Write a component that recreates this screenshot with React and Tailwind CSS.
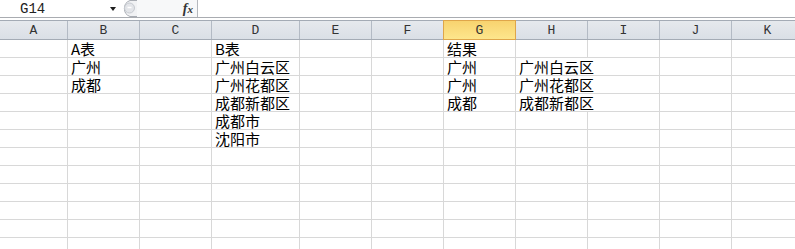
import React from "react";

const cols = [
  { l: "A", w: 68 },
  { l: "B", w: 72 },
  { l: "C", w: 72 },
  { l: "D", w: 88 },
  { l: "E", w: 72 },
  { l: "F", w: 72 },
  { l: "G", w: 72 },
  { l: "H", w: 72 },
  { l: "I", w: 72 },
  { l: "J", w: 72 },
  { l: "K", w: 72 },
];

const data = [
  { 1: "A表", 3: "B表", 6: "结果" },
  { 1: "广州", 3: "广州白云区", 6: "广州", 7: "广州白云区" },
  { 1: "成都", 3: "广州花都区", 6: "广州", 7: "广州花都区" },
  { 3: "成都新都区", 6: "成都", 7: "成都新都区" },
  { 3: "成都市" },
  { 3: "沈阳市" },
  {}, {}, {}, {}, {}, {},
];

const cellFont = { fontFamily: '"Noto Sans CJK SC", "Noto Sans", sans-serif' };
const monoFont = { fontFamily: '"Liberation Mono", "DejaVu Sans Mono", monospace' };

export default function App() {
  return (
    <div className="w-[795px] h-[249px] overflow-hidden bg-white">
      {/* Formula bar */}
      <div className="flex h-[18px] border-b border-[#a9acb1] bg-white">
        <div className="flex w-[121px] items-center">
          <span className="ml-[20px] text-[14px] leading-none text-[#222]" style={monoFont}>
            G14
          </span>
          <span className="ml-auto mr-[5px] h-0 w-0 border-x-[3.5px] border-t-[4px] border-x-transparent border-t-[#1e1e1e]" />
        </div>
        <svg width="16" height="17" viewBox="0 0 16 17" className="shrink-0">
          <path d="M16 0.5 H9 A8.5 8.5 0 0 0 9 16.5 H16" fill="#f1f2f4" stroke="#a9adb4" />
          <circle cx="8.5" cy="8" r="5" fill="#e3e5e9" stroke="#c6cad0" />
          <path d="M6.5 7.5 H10.5" stroke="#ffffff" strokeWidth="1.5" />
        </svg>
        <div className="flex flex-1 max-w-[61px] items-center justify-end border-r border-[#b5b8bd] bg-[#f7f8f9] pr-[4px]">
          <span
            className="text-[14px] font-bold italic leading-none text-[#333]"
            style={{ fontFamily: '"Liberation Serif", serif' }}
          >
            f<span className="text-[11px]">x</span>
          </span>
        </div>
        <div className="flex-1" />
      </div>

      {/* Column headers */}
      <div className="mt-[2px] flex h-[20px] border-y border-[#a4abb5] bg-gradient-to-b from-[#e6e9ed] to-[#dadfe6]">
        {cols.map((c) =>
          c.l === "G" ? (
            <div
              key={c.l}
              className="-my-px -ml-px flex h-[20px] shrink-0 items-center justify-center border border-[#dfa64a] bg-gradient-to-b from-[#f8d36f] to-[#fde68c] pt-[2px] text-[13px] text-[#333]"
              style={{ width: c.w + 1, ...monoFont }}
            >
              {c.l}
            </div>
          ) : (
            <div
              key={c.l}
              className="flex shrink-0 items-center justify-center border-r border-[#b3bac4] pt-[2px] text-[13px] text-[#333]"
              style={{ width: c.w, ...monoFont }}
            >
              {c.l}
            </div>
          )
        )}
      </div>

      {/* Rows */}
      {data.map((row, ri) => (
        <div key={ri} className="flex h-[18px] border-b border-[#d8d8d8]">
          {cols.map((c, ci) => {
            const text = row[ci];
            const overflow = ci === 7 && text;
            return (
              <div
                key={ci}
                className={`relative shrink-0 whitespace-nowrap ${overflow ? "" : "border-r border-[#d8d8d8]"}`}
                style={{ width: c.w }}
              >
                {text && (
                  <span
                    className="absolute left-[3px] top-0 text-[15px] leading-[18px] text-black"
                    style={cellFont}
                  >
                    {text}
                  </span>
                )}
              </div>
            );
          })}
        </div>
      ))}
    </div>
  );
}
